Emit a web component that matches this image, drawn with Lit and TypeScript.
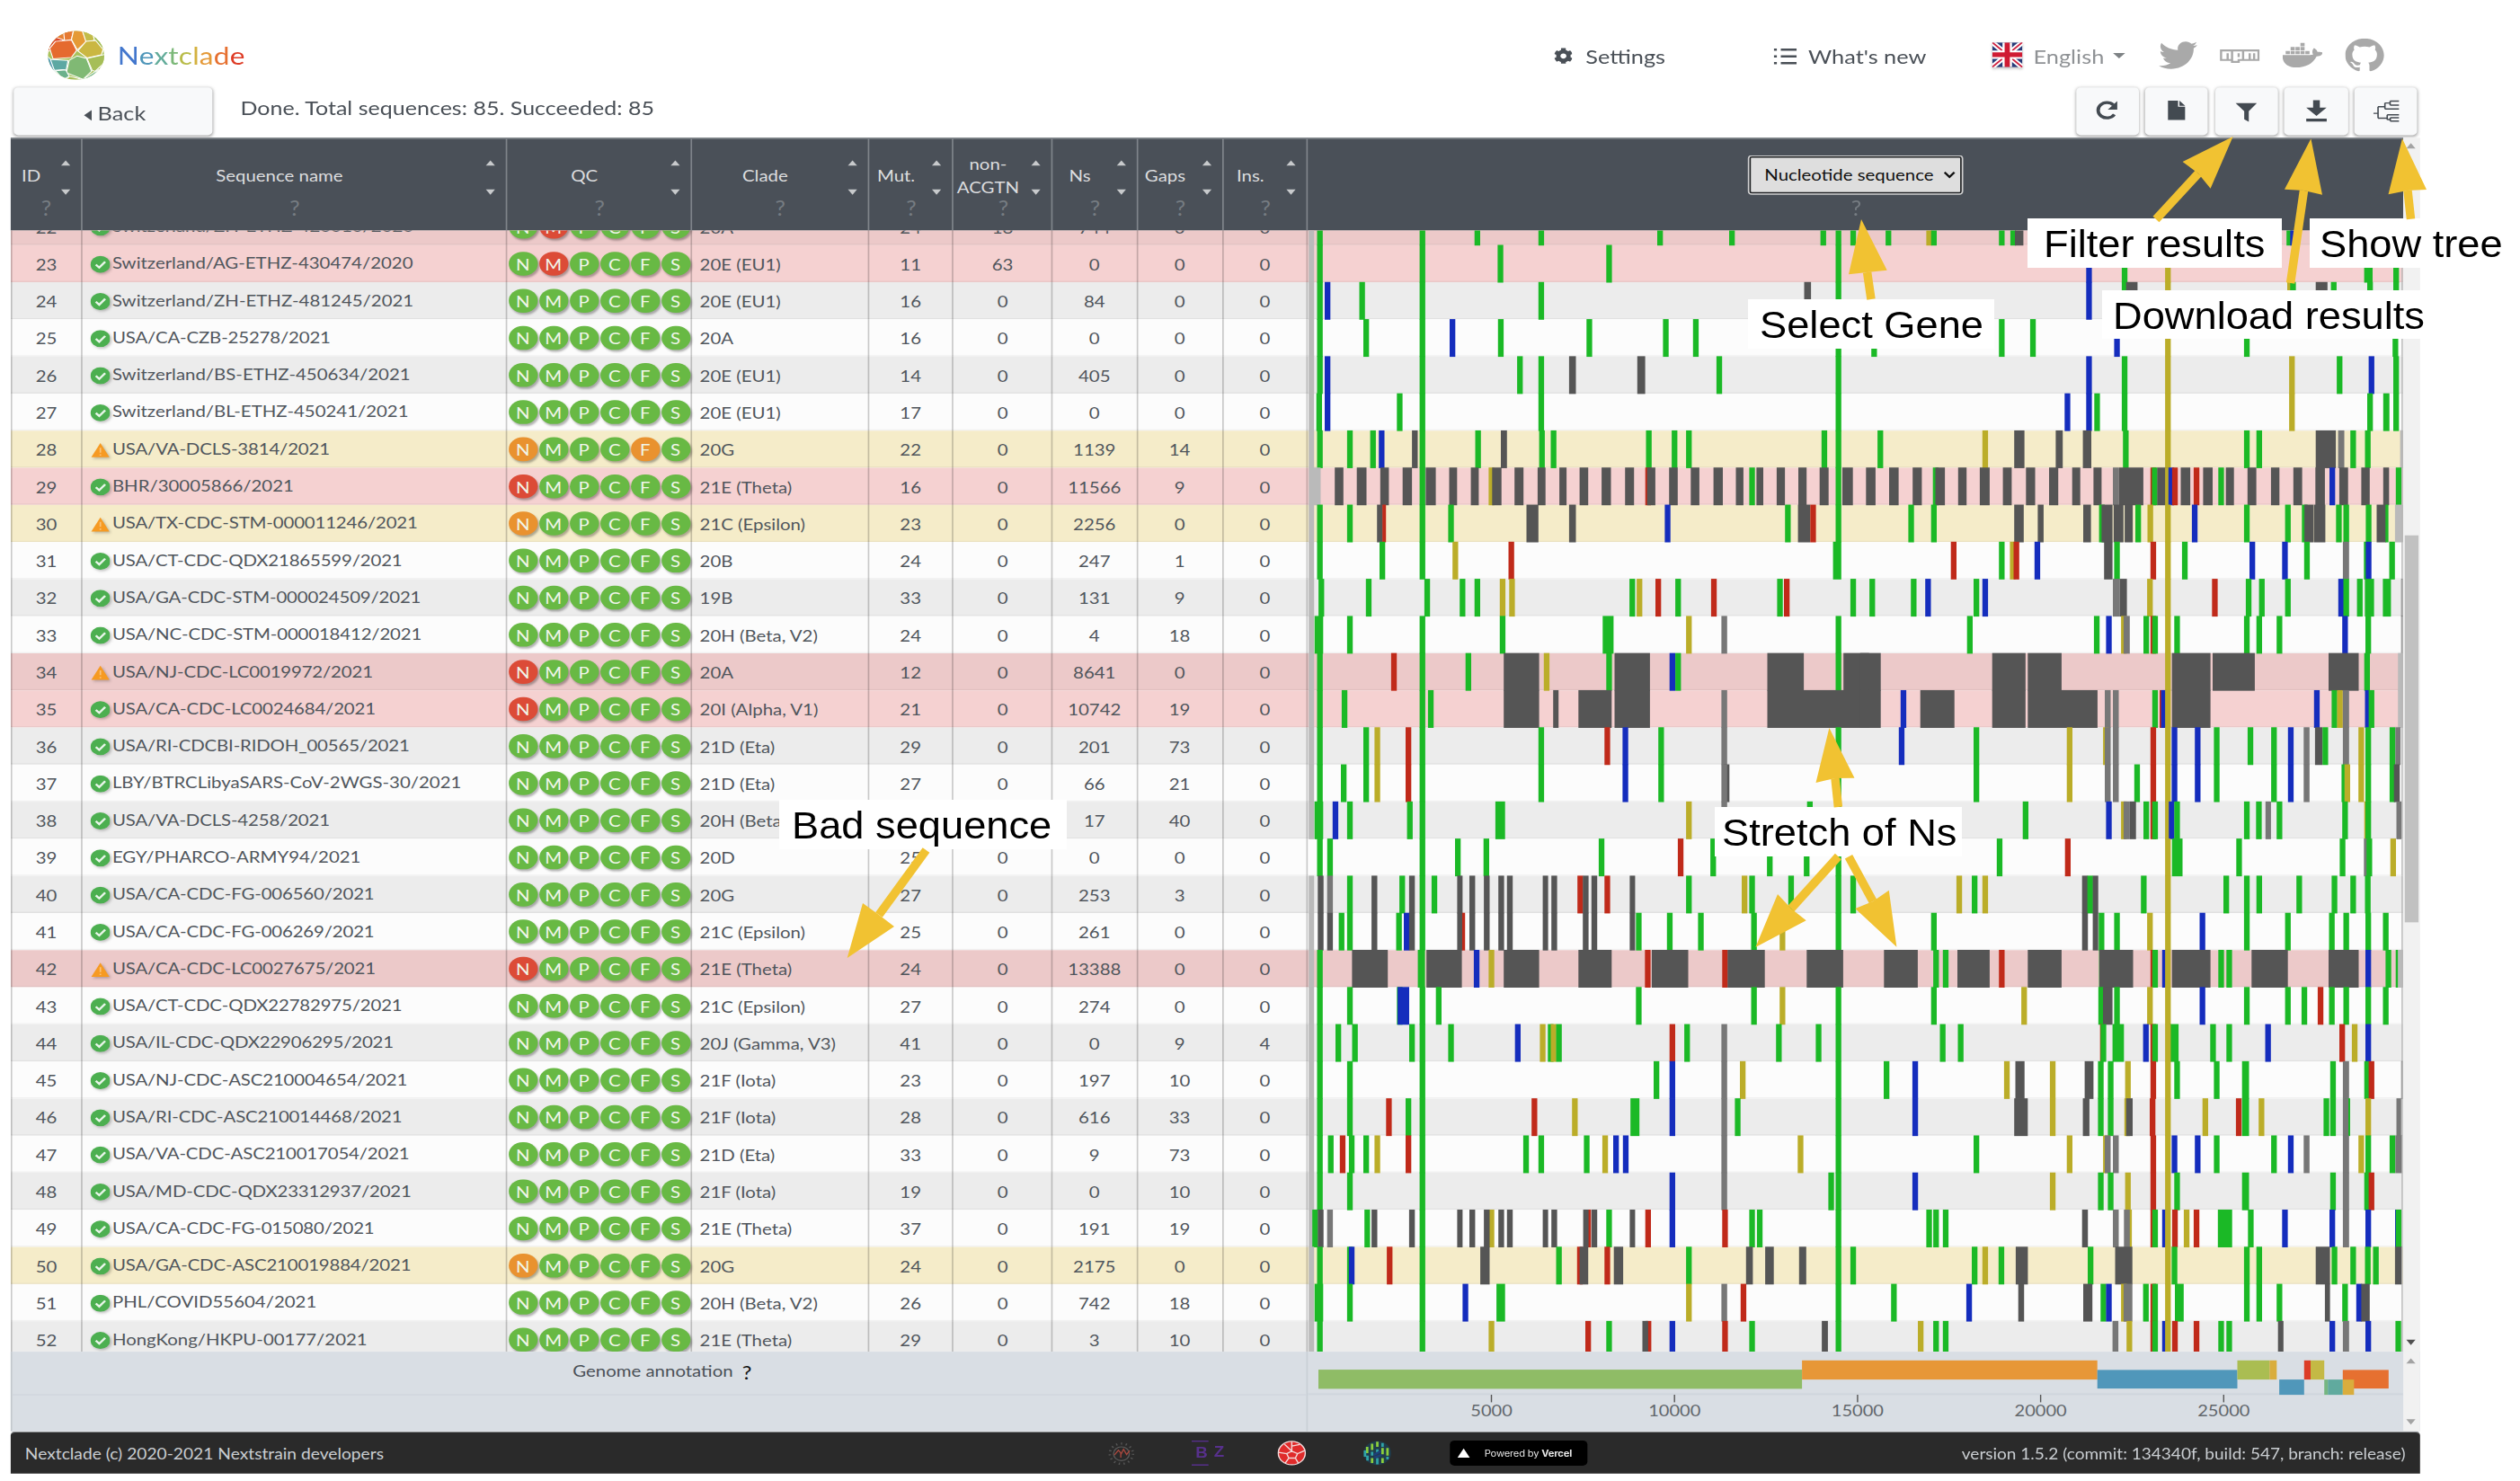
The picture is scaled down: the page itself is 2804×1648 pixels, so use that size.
import { LitElement, html, svg, css } from "lit";
import { customElement, property } from "lit/decorators.js";
import { classMap } from "lit/directives/class-map.js";

interface SeqRow {
  id: number;
  name: string;
  warn: boolean;
  qc: string;
  clade: string;
  counts: number[];
  head: string;
  tail: string;
}

/* One line per sequence:
   id | name | icon | qc flags | clade | mut nonACGTN ns gaps ins | first half markers | second half markers
   Marker: letter + centre, or letter + start-end. */
const SOURCE = `
22|Switzerland/ZH-ETHZ-420010/2020|o|grgggg|20A|24 18 744 0 0|m16-31 g47 g331 g483 g660 g989 g1188 g1441 g1483 g1524|g77 y188 g201 g386 g417 n422-445 g1170 b1180
23|Switzerland/AG-ETHZ-430474/2020|o|grgggg|20E (EU1)|11 63 0 0 0|m16-31 g47 g331 g547 g848 g1483|b624 g721 y839 g1374-1397 g1461
24|Switzerland/ZH-ETHZ-481245/2021|o|gggggg|20E (EU1)|16 0 84 0 0|m16-31 g47 b68 g164 g331 g660 n1388-1407 g1483|b624 g721 n725-756 y839 y1172 g1180 n1242-1274 g1291 g1390 g1461
25|USA/CA-CZB-25278/2021|o|gggggg|20A|16 0 0 0 0|m16-31 g47 g175 g331 b414 g548 g793 g1005 g1088 g1483|g38 g386 g471 b700 y839 g1054 g1459
26|Switzerland/BS-ETHZ-450634/2021|o|gggggg|20E (EU1)|14 0 405 0 0|m16-31 g47 b68 g331 g601 g660 n737-756 n926-948 g1153 g1483|b624 g721 y839 y1177 g1307 b1394 g1461
27|Switzerland/BL-ETHZ-450241/2021|o|gggggg|20E (EU1)|17 0 0 0 0|m16-31 g45 b68 g268 g331 g660 g1483|b565 b624 g646 g721 y839 y1177 g1390 g1426-1443 g1461
28|USA/VA-DCLS-3814/2021|w|ogggog|20G|22 0 1139 14 0|m16-31 g47 g130 g194 b218 n302-318 g331 g485 n548-565 g662 g694 g958 g1029 g1069 g1444 g1483|g55 y341 n420-448 n533-552 n607-630 g724 y839 g1054 g1088 n1242-1297 x1303-1320 g1344 g1384 m1472-1480
29|BHR/30005866/2021|o|rggggg|21E (Theta)|16 0 11566 9 0|m16-49 n88-112 n149-176 n214-238 n276-302 g331 n340-368 n405-427 n465-487 y522 n524-550 n586-611 n650-672 n710-730 n766-790 n827-853 n892-917 r956 n953-976 n1014-1038 n1074-1098 n1137-1163 n1199-1220 g1244 n1256-1275 n1312-1335 n1372-1395 n1431-1456 g1483 n1494-1523|n16-42 n79-105 n143-168 g206 n205-231 n267-290 n326-353 n389-413 n452-477 n515-540 n578-600 n636-658 x689-706 n706-772 r799 g803 n810-839 y839 b848 r858 n874-900 r917 n935-961 g984 n997-1019 n1056-1080 n1120-1143 n1181-1205 n1241-1267 b1287 n1306-1330 n1366-1389 n1426-1442 g1468
30|USA/TX-CDC-STM-000011246/2021|w|oggggg|21C (Epsilon)|23 0 2256 0 0|m16-31 g47 g130 n205-221 r220-230 g331 g410 n619-652 n737-756 b1010 g1343 n1371-1405 r1413 g1483|g139 g201 n420-446 n484-500 n608-629 g659 n658-688 n691-718 n721-743 g758 y791 y839 b912 g1054 g1166 g1212 n1211-1236 n1237-1268 g1305 g1325 g1386 n1408-1434 g1432-1440 m1458-1480
31|USA/CT-CDC-QDX21865599/2021|o|gggggg|20B|24 0 247 1 0|m16-31 g47 g220 g331 y422 r577 g1468-1491|r255 g386 y416 r426 b483 n665-688 g700 r799 y839 g885 b1069 b1158 g1218 x1316-1333 g1381 b1386 g1450
32|USA/GA-CDC-STM-000024509/2021|o|gggggg|19B|33 0 131 9 0|m16-31 g51 g182 g344 g442 g483 y553 y579 g912 y932 r984 g1039 r1138 g1321 r1340 g1524|g33 g146 b185 g317 b341 x689-708 n708-727 y790 y839 r967 g1059 g1095 g1166 b1311 g1325 g1362 g1376-1401 g1425-1447 n1475-1479
33|USA/NC-CDC-STM-000018412/2021|o|gggggg|20H (Beta, V2)|24 0 4 18 0|m16-31 g32-56 g130 g331 g553 g830-860 y1069 x1159-1175 g1483|g299 g645 b678 y719 x718-735 g780 r799 g804 y839 g864 g1054 g1088 g1143 b1322 g1385 n1475-1479
34|USA/NJ-CDC-LC0019972/2021|w|rggggg|20A|12 0 8641 0 0|m16-31 g47 r252 g331 g458 n556-654 y675 g848 n863-961 b1023 g1039 n1286-1387 g1483 n1497-1568|n0-56 n360-451 n457-549 y839 n850-955 n961-1076 n1277-1359 g1382 m1466-1480
35|USA/CA-CDC-LC0024684/2021|o|rggggg|20I (Alpha, V1)|21 0 10742 19 0|m16-31 g47 g115 g331 g354 n556-654 n693-708 n763-855 n863-961 x1159-1175 n1286-1568|n0-56 b118 n164-257 n360-451 n457-647 x667-683 x689-705 g804 r824 b828 y839 n850-955 b1245 g1293 y1308 x1316-1333 b1384 g1394 m1466-1480
36|USA/RI-CDCBI-RIDOH_00565/2021|o|gggggg|21D (Eta)|29 0 201 73 0|m16-31 g47 g175 y206 r292 g331 g660 r843 b893 g992 x1159-1175 g1483|b113 g317 y571 y670 x667-683 x689-705 r799 y839 b857 b920 g972 g1064 g1128 b1174 x1209-1225 n1240-1260 g1268 x1316-1333 y1366 g1385 g1451 x1459-1473
37|LBY/BTRCLibyaSARS-CoV-2WGS-30/2021|o|gggggg|21D (Eta)|27 0 66 21 0|m16-31 g47 g113 g175 y206 r292 g331 g660 b893 g992 n1166-1181 x1159-1175 g1483|g317 y571 x667-683 x689-705 g755 r799 y839 b857 b920 g972 g1128 b1174 x1209-1225 g1320 y1328 y1366 g1385 g1451 n1455-1471
38|USA/VA-DCLS-4258/2021|o|gggggg|20H (Beta, V2)|25 0 17 40 0|m16-31 g32-56 b90 g130 g296 g331 g533-560 y1069 x1159-1175 g1404 g1483|g451 b678 y719 x718-735 n735-752 g780 r799 g804 y839 b849 g864 g1054 g1087 x1105-1120 g1143 g1322 y1382 g1385 x1462-1476
39|EGY/PHARCO-ARMY94/2021|o|gggggg|20D|25 0 0 0 0|g47 g75 g331 g429 g508 g827 r1046 g1136 g1293 g1395 g1483|g380 r566 g850-879 y839 g1033 g1315 x1381 g1388 y1453
40|USA/CA-CDC-FG-006560/2021|o|gggggg|20G|27 0 253 3 0|m16-31 n41-57 x67-83 g130 n190-206 g275 n294-310 g331 g364 n427-442 n461-477 n501-517 n541-557 n565-581 n664-679 n688-704 r768 n775-791 n799-815 r843 n905-920 g1069 y1223 g1244 g1352 g1483 g1524|y270 g312 y341 n605-621 g627 n634-649 g773 y839 g998 g1054 g1088 g1197 g1293 g1344 g1384
41|USA/CA-CDC-FG-006269/2021|o|gggggg|21C (Epsilon)|25 0 261 0 0|m16-31 n41-57 n67-83 g107 g130 n190-206 g266 b287 n294-310 g331 n427-442 r441-449 n461-477 n501-517 n541-557 n565-581 n664-679 n688-704 n775-791 n799-815 n905-920 g930 g1016 g1102 g1249 y1328 g1483|g201 n605-621 n634-649 g658 g700 y790 y839 b933 g1054 g1166 g1286 g1325 g1385 g1433
42|USA/CA-CDC-LC0027675/2021|w|rggggg|21E (Theta)|24 0 13388 0 0|m16-31 g47 n136-235 g318-338 n342-440 b481 y522 n556-654 n763-855 r955 n966-1067 r1169 n1176-1279 n1395-1496|n65-157 g207 g233 n265-353 r386 n457-549 g659 n652-744 r799 g804 b831 y839 n850-955 g984 g1006 n1067-1166 n1277-1359 b1385 g1440 g1460-1467 m1466-1480
43|USA/CT-CDC-QDX22782975/2021|o|gggggg|21C (Epsilon)|27 0 274 0 0|m16-31 g47 g130 g268 b262-294 g331 g376 g930 g1249 y1328 g1483|g201 y447 g657 n662-688 g700 y790 y839 b933 g1054 g1166 g1211 r1255 g1286 g1325 g1385 g1433
44|USA/IL-CDC-QDX22906295/2021|o|gggggg|20J (Gamma, V3)|41 0 0 9 4|m16-31 g47 g98 g144 g302 g331 g410 b595 y664 g686 y694 g709 r1023 g1064 x1159-1175 g1318 g1428 g1483|g225 g274 r654-660 g663 g688-719 b779 r799 g804 g844-868 y839 g962 g1006 b1112 r1314 y1348 b1385
45|USA/NJ-CDC-ASC210004654/2021|o|gggggg|21F (Iota)|23 0 197 10 0|m16-31 g47 g130 g331 g979 b1023 x1159-1175 y1218 g1483|g72 b150 y400 n423-448 y525 n612-636 g656 g683 y730 r799 y839 g864 g972 g1041-1060 g1289 x1316-1333 g1382 r1394 n1475-1479
46|USA/RI-CDC-ASC210014468/2021|o|gggggg|21F (Iota)|28 0 616 33 0|m16-31 g47 g130 r238 g292 g331 r641 y753 g907-932 b1023 x1159-1175 g1204 g1483|b150 n420-457 y525 n607-625 g656 g683 y728 n725-743 r797 y839 y941 r1032 g1041-1060 y1094 g1271 g1289 g1328 x1316-1331 y1385 x1462-1475
47|USA/VA-CDC-ASC210017054/2021|o|gggggg|21D (Eta)|33 0 9 73 0|m16-31 g47 g77 r110 g135 g175 y206 r292 g331 g618 g660 g786 y837 b867 b894 x1159-1175 y1378 g1483|g317 y571 y670 x667-683 x689-705 r799 y839 b857 b920 g972 g1128 b1174 x1209-1225 x1316-1333 y1366 g1385 g1451 x1459-1478
48|USA/MD-CDC-QDX23312937/2021|o|gggggg|21F (Iota)|19 0 0 10 0|m16-31 g47 g130 g331 b1023 x1159-1175 g1463 g1483|b150 y525 g656 g683 y730 r799 y839 g864 g1041-1060 g1289 x1316-1333 g1382 r1394
49|USA/CA-CDC-FG-015080/2021|o|gggggg|21E (Theta)|37 0 191 19 0|m16-31 g26-42 n41-57 x67-83 g178 n190-206 n294-310 g331 n427-442 n461-477 y522 n501-517 n541-557 n565-581 n664-679 n688-704 r790 n776-791 n799-815 g848 n905-920 r956 b1023 r1169 g1244 g1265 g1483|g188 g207 g233 n605-621 x689-705 y733 x719-735 r799 g804 b831 y839 r858 y890 r917 g975-1014 g1065 b1158 b1287 x1316-1333 b1385 b1466 g1468
50|USA/GA-CDC-ASC210019884/2021|o|oggggg|20G|24 0 2175 0 0|m16-31 g47 g130 b135 r240 n491-517 g331 g709 r767 n766-790 r843 n861-887 g1069 n1227-1246 n1280-1304 n1374-1394 g1483 g1524|g312 y341 g385 n424-457 g628 n695-742 g857 y839 g1054 g1088 n1242-1281 g1293 g1344 g1384 g1406 n1458-1477
51|PHL/COVID55604/2021|o|gggggg|20H (Beta, V2)|26 0 742 18 0|m16-31 g32-56 g130 g331 b450 g536-560 y1069 x1159-1175 r1220 g1483|g92 b297 n431-447 n608-633 g663 b678 y719 x718-742 g779 r799 g804 y839 g858-882 g1054 g1088 g1143 n1267-1281 g1322 b1360 n1366-1389
52|HongKong/HKPU-00177/2021|o|gggggg|21E (Theta)|29 0 3 10 0|m16-31 g47 g331 y522 r790 g848 r957 n940-956 b1023 r1169 g1244 n1437-1454 g1483|y165 g207 g233 x688-704 y734 r799 g804 b831 y839 r858 r917 g984 g1006 n1139-1154 b1287 x1316-1333 b1385 g1467
`;

const ROWS: SeqRow[] = SOURCE.trim()
  .split("\n")
  .map((line) => {
    const [id, name, icon, qc, clade, counts, head, tail] = line.split("|");
    return { id: +id, name, warn: icon === "w", qc, clade, counts: counts.split(" ").map(Number), head, tail };
  });

const COLORS: Record<string, string> = {
  g: "#1bb926",
  b: "#152dbd",
  r: "#c02a1a",
  y: "#bbad29",
  n: "#555555",
  x: "#777777",
  m: "#bababa",
};

const MARKER = 6.3;

function markers(list: string, origin: number, scale: number) {
  return list
    .split(" ")
    .filter(Boolean)
    .map((token) => {
      const [a, b] = token.slice(1).split("-").map(Number);
      const start = b === undefined ? origin + a / scale - MARKER / 2 : origin + a / scale;
      const width = b === undefined ? MARKER : (b - a) / scale;
      return svg`<rect x=${start.toFixed(1)} y="-0.3" width=${width.toFixed(1)} height="42" fill=${COLORS[token[0]]}></rect>`;
    });
}

const COLUMNS: [string, string][] = [
  ["ID", "id"],
  ["Sequence name", "name"],
  ["QC", "qc"],
  ["Clade", "clade"],
  ["Mut.", "mut"],
  ["non- ACGTN", "non"],
  ["Ns", "ns"],
  ["Gaps", "gaps"],
  ["Ins.", "ins"],
];

const GENES: [number, number, number, number, string][] = [
  [1467.2, 1524.7, 538.1, 21.3, "#8fbc66"],
  [2005.3, 1514.4, 328.6, 21.3, "#e79737"],
  [2333.9, 1525, 155.8, 20.7, "#5097ba"],
  [2489.7, 1514.4, 35.8, 21.3, "#aabd52"],
  [2525.5, 1514.4, 8, 21.3, "#d9ad3d"],
  [2536.3, 1535.7, 27.7, 17, "#5097ba"],
  [2564, 1514.4, 7.2, 21.3, "#dc3d27"],
  [2571.2, 1514.4, 15.2, 21.3, "#c4b945"],
  [2607, 1525, 51, 20.7, "#e67030"],
  [2586.4, 1535.7, 4, 17, "#75b681"],
  [2590.4, 1535.7, 16.6, 17, "#60aa9e"],
  [2607, 1535.7, 12.5, 17, "#d9ad3d"],
];

const TICKS: [number, number][] = [
  [5000, 1659.7],
  [10000, 1863.4],
  [15000, 2067.1],
  [20000, 2270.8],
  [25000, 2474.5],
];

const NOTES: [string, string][] = [
  ["Select Gene", "n-gene"],
  ["Filter results", "n-filter"],
  ["Show tree", "n-tree"],
  ["Download results", "n-down"],
  ["Stretch of Ns", "n-ns"],
  ["Bad sequence", "n-bad"],
];

/* tip, two barb corners, shaft start, shaft end */
const ARROWS: number[][] = [
  [2071, 244, 2057, 305.3, 2099.7, 300.7, 2077.6, 303, 2082, 333],
  [2484.6, 152, 2428.6, 180, 2459.6, 209.7, 2446, 193, 2399, 244],
  [2571.4, 154.3, 2542, 210.7, 2584, 216.7, 2563.5, 212, 2548.6, 315],
  [2673, 154.3, 2657.5, 216.3, 2700, 211, 2679, 212, 2682.5, 243.7],
  [2035.4, 810, 2020.5, 871, 2063.5, 865.7, 2042, 866, 2045.4, 898],
  [1953.4, 1054, 1978, 995, 2009.7, 1024.3, 1993, 1011, 2045.4, 953],
  [2110.4, 1053.7, 2101.8, 990.7, 2064.3, 1011, 2084, 1003, 2057, 953.3],
  [942.7, 1066, 960, 1005, 995, 1031, 978, 1018, 1030.5, 946],
];

@customElement("seq-row")
class SeqRowElement extends LitElement {
  @property({ attribute: false }) row!: SeqRow;

  static styles = css`
    :host { display: block; height: 28px; }
    .row { display: grid; grid-template-columns: 47.1px 278px 121.1px 115.6px 55.8px 64.7px 55.5px 56.1px 55.5px 716.6px; height: 28px; font-size: 12px; color: #50565c; box-shadow: inset 0 -1px 0 rgba(0,0,0,.045); }
    .odd { background: #fcfcfc; }
    .even { background: #ececec; }
    .bad.odd { background: #f5d1d1; }
    .bad.even { background: #ecc9c9; }
    .mid { background: #f5ecc9; }
    .cell { display: flex; align-items: center; justify-content: center; border-right: 1px solid rgba(0,0,0,.2); box-sizing: border-box; min-width: 0; white-space: nowrap; padding-top: .5px; }
    .first { border-left: 1px solid rgba(0,0,0,.2); }
    .left { justify-content: flex-start; padding-left: 5px; }
    .icon { width: 13.4px; height: 13px; flex: none; margin-right: 1.2px; filter: drop-shadow(1px 1px 1px rgba(0,0,0,.25)); }
    .warn { margin-top: 1.5px; }
    .name { position: relative; top: -.4px; }
    .usa { letter-spacing: -.09px; }
    .qc { padding-left: 1px; gap: 1.3px; justify-content: flex-start; }
    .dot { width: 18.7px; height: 18.7px; border-radius: 50%; background: #68b944; color: #f0f5ea; display: flex; align-items: center; justify-content: center; box-shadow: 1px 1.5px 1.5px rgba(0,0,0,.3); flex: none; }
    .dot.r { background: #dc4b37; }
    .dot.o { background: #e9922f; }
    .track { display: block; width: 716.6px; height: 28px; overflow: visible; }
  `;

  render() {
    const r = this.row;
    const bad = r.qc.includes("r");
    const mid = !bad && r.qc.includes("o");
    return html`
      <div class=${classMap({ row: true, odd: r.id % 2 === 1, even: r.id % 2 === 0, bad, mid })}>
        <div class="cell first">${r.id}</div>
        <div class="cell left">
          ${r.warn
            ? html`<svg class="icon warn" viewBox="0 0 14 14"><path d="M7 1.5 L13.4 13 H.6Z" fill="#f69a22"></path><path d="M7 5.2v4M7 10.5v1.2" stroke="#f9c27a" stroke-width="1.1"></path></svg>`
            : html`<svg class="icon" viewBox="0 0 14 14"><circle cx="7" cy="7" r="6.9" fill="#4caf50"></circle><path d="M3.8 7.2 L6.2 9.6 L10.4 4.9" fill="none" stroke="#e8f5e9" stroke-width="1.6"></path></svg>`}
          <span class=${classMap({ name: true, usa: r.name.startsWith("USA") })}>${r.name}</span>
        </div>
        <div class="cell qc">
          ${"NMPCFS".split("").map((c, i) => html`<span class="dot ${r.qc[i]}">${c}</span>`)}
        </div>
        <div class="cell left">${r.clade}</div>
        ${r.counts.map((n) => html`<div class="cell">${n}</div>`)}
        <svg class="track" viewBox="1455.4 0 1218.2 41.29" preserveAspectRatio="none">
          ${markers(r.head, 1450, 2.489)} ${markers(r.tail, 2070, 2.45)}
          <rect x="2672.4" y="0" width="1.4" height="41.3" fill="#b5b5b5"></rect>
        </svg>
      </div>
    `;
  }
}

const cog = svg`<path d="M487.4 315.7l-42.6-24.6c4.3-23.2 4.3-47 0-70.2l42.6-24.6c4.9-2.8 7.1-8.6 5.5-14-11.1-35.6-30-67.8-54.7-94.6-3.8-4.1-10-5.1-14.8-2.3L380.8 110c-17.9-15.4-38.5-27.3-60.8-35.1V25.8c0-5.6-3.9-10.5-9.4-11.7-36.7-8.2-74.3-7.8-109.2 0-5.5 1.2-9.4 6.1-9.4 11.7V75c-22.2 7.9-42.8 19.8-60.8 35.1L88.7 85.5c-4.9-2.8-11-1.9-14.8 2.3-24.7 26.7-43.6 58.9-54.7 94.6-1.7 5.4.6 11.2 5.5 14L67.3 221c-4.3 23.2-4.3 47 0 70.2l-42.6 24.6c-4.9 2.8-7.1 8.6-5.5 14 11.1 35.6 30 67.8 54.7 94.6 3.8 4.1 10 5.1 14.8 2.3l42.6-24.6c17.9 15.4 38.5 27.3 60.8 35.1v49.2c0 5.6 3.9 10.5 9.4 11.7 36.7 8.2 74.3 7.8 109.2 0 5.5-1.2 9.4-6.1 9.4-11.7v-49.2c22.2-7.9 42.8-19.8 60.8-35.1l42.6 24.6c4.9 2.8 11 1.9 14.8-2.3 24.7-26.7 43.6-58.9 54.7-94.6 1.5-5.5-.7-11.3-5.6-14.1zM256 336c-44.1 0-80-35.9-80-80s35.9-80 80-80 80 35.9 80 80-35.9 80-80 80z"></path>`;

@customElement("app-root")
class AppRoot extends LitElement {
  static styles = css`
    :host { display: block; position: relative; width: 2804px; height: 1648px; background: #fff; overflow: hidden; font-family: Lato, "Liberation Sans", sans-serif; }
    .stage { width: 1584px; height: 1117px; transform: scale(1.7, 1.4746); transform-origin: 0 0; color: #4a5057; font-size: 12px; display: flex; flex-direction: column; }
    .nav { height: 66px; display: flex; align-items: center; padding-top: 17px; box-sizing: border-box; }
    .logo { width: 37.6px; height: 37.6px; margin-left: 31.2px; }
    .brand { width: 939.6px; margin-left: 8.2px; font-size: 18.6px; position: relative; top: .6px; }
    .brand span { letter-spacing: .12px; }
    .l1 { color: #4377cd; } .l2 { color: #5097ba; } .l3 { color: #63ac9a; } .l4 { color: #7cb879; }
    .l6 { color: #b9bc4a; } .l7 { color: #d4b13f; } .l8 { color: #e49938; } .l9 { color: #e67030; } .l10 { color: #de3c26; }
    .gear { width: 12.6px; height: 12.6px; fill: #4a5057; margin-right: 8.7px; position: relative; top: .6px; }
    .navtxt { font-size: 14.9px; width: 123.4px; white-space: nowrap; }
    .list { width: 15px; height: 13px; margin-right: 7.3px; stroke: #4a5057; stroke-width: 1.7; position: relative; top: .6px; }
    .news { width: 120.8px; }
    .flag { width: 19.6px; height: 18.6px; margin-right: 7px; filter: drop-shadow(0 1.5px 1px rgba(0,0,0,.25)); }
    .lang { width: 51.6px; color: #8f9295; }
    .caret { border: 4.4px solid transparent; border-top: 4.4px solid #7e8285; border-bottom: 0; width: 0; margin-right: 22.2px; }
    .soc { height: 25.4px; fill: #a9a9a9; flex: none; }
    .tw { width: 25.4px; margin-right: 15px; }
    .npm { width: 26px; margin-right: 15px; }
    .dk { width: 26.4px; margin-right: 14.8px; }
    .gh { width: 25.4px; }
    .bar { height: 38px; display: flex; padding-left: 8.5px; box-sizing: border-box; }
    .btn { height: 35.8px; border-radius: 3px; background: #f8f9fa; box-shadow: 0 1px 2.5px rgba(0,0,0,.38); display: flex; align-items: center; justify-content: center; flex: none; box-sizing: border-box; }
    .back { width: 130px; font-size: 14.9px; gap: 4.4px; padding: 2.4px 0 0 3px; }
    .tri { border: 4.6px solid transparent; border-right: 5.4px solid #4a5057; border-left: 0; margin-top: 3px; }
    .status { width: 1202px; padding-left: 18.8px; font-size: 14.7px; letter-spacing: .02px; padding-top: 6.4px; }
    .tools { display: flex; gap: 4.4px; margin-left: -.7px; }
    .tool { width: 41.2px; }
    .tool svg { width: 22px; height: 25px; display: block; }
    .main { display: flex; margin-left: 6.8px; height: 916.4px; }
    .table { width: 1566px; display: flex; flex-direction: column; }
    .head { height: 69.9px; display: grid; grid-template-columns: 47.1px 278px 121.1px 115.6px 55.8px 64.7px 55.5px 56.1px 55.5px 716.6px; background: #4a5058; color: #dcdddf; flex: none; box-shadow: inset 0 1px 0 #81868b; }
    .h { border-right: 1px solid #7f848a; display: grid; grid-template-columns: 1fr 19px; grid-template-rows: 53px 17px; box-sizing: border-box; }
    .h.last { border: 0; grid-template-columns: 1fr; justify-items: center; }
    .lab { display: flex; align-items: center; justify-content: center; text-align: center; line-height: 17.4px; padding-top: 4px; white-space: nowrap; }
    .two { white-space: normal; width: 42px; }
    .sorts { display: flex; flex-direction: column; gap: 18.2px; padding: 17.1px 0 0 6px; }
    .up { width: 0; border: 3px solid transparent; border-top: 0; border-bottom: 4px solid #c8cacc; }
    .dn { width: 0; border: 3px solid transparent; border-bottom: 0; border-top: 4px solid #c8cacc; }
    .q { grid-column: 1 / -1; text-align: center; color: #767c82; font-size: 15px; line-height: 15px; margin-top: -6.6px; padding-left: 1px; }
    .sel { margin-top: 13.6px; width: 138.8px; height: 28px; border: 1.2px solid #1d1f21; outline: 1px solid #cfcfcf; background: #dedede; color: #111; display: flex; align-items: center; justify-content: space-between; padding: 0 3px 0 8.8px; box-sizing: border-box; border-radius: 1.5px; white-space: nowrap; }
    .sel svg { width: 8px; height: 8px; fill: none; stroke: #111; stroke-width: 1.4; }
    .rows { height: 846.6px; overflow: hidden; }
    .shift { margin-top: -17.1px; display: block; }
    .side { width: 11.2px; background: #f1f1f1; display: flex; flex-direction: column; align-items: center; box-sizing: border-box; padding: 4.4px 0 5px; }
    .thumb { width: 8.6px; height: 292px; background: #c1c1c1; margin-top: 292px; }
    .fill { flex: 1; }
    .sup { border: 3px solid transparent; border-top: 0; border-bottom: 4px solid #a3a3a3; width: 0; }
    .sdn { border: 3px solid transparent; border-bottom: 0; border-top: 4px solid #505050; width: 0; }
    .sdn.dim { border-top-color: #a3a3a3; }
    .genome { margin-left: 6.8px; height: 60.1px; display: flex; background: #d9dee4; box-sizing: border-box; }
    .gl { width: 849.3px; border-right: 1px solid #c9cfd6; border-left: 1px solid #c3c8cd; box-sizing: border-box; }
    .gtxt { height: 32.6px; border-bottom: 1.4px solid #d0d6dd; display: flex; justify-content: center; padding: 7px 0 0 4px; gap: 6px; box-sizing: border-box; line-height: 16px; }
    .gq { color: #111; font-size: 14px; position: relative; top: 1px; }
    .gsvg { width: 716.6px; height: 60.1px; display: block; }
    .gside { flex: none; height: 60.1px; }
    .foot { margin-left: 6.8px; width: 1577.2px; height: 31.7px; background: #2a2a2a; border-top: 1px solid #8d9092; box-sizing: border-box; border-radius: 3px 3px 0 0; color: #c9cdd1; font-size: 11.2px; display: flex; align-items: center; padding: 0 9.6px; }
    .copy { width: 709px; white-space: nowrap; font-size: 11.3px; }
    .ver { margin-left: auto; white-space: nowrap; }
    .f1 { width: 18px; height: 18px; margin-right: 37px; }
    .bz { width: 20px; display: flex; gap: 4px; color: #57308c; font-size: 11px; margin-right: 36px; font-weight: 700; font-family: "Liberation Sans", sans-serif; justify-content: center; line-height: 17px; }
    .bb { border-top: 1px solid #57308c; border-bottom: 1px solid #57308c; padding-left: 3px; }
    .f3 { width: 19px; height: 19px; margin-right: 36.6px; }
    .vercel { width: 90px; height: 19px; background: #000; border-radius: 3px; color: #e6e6e6; font-size: 6.6px; display: flex; align-items: center; gap: 9.5px; margin-left: 1px; font-family: Inter, sans-serif; letter-spacing: -.12px; white-space: nowrap; }
    .vt { border: 4px solid transparent; border-top: 0; border-bottom: 7px solid #fff; margin-left: 5.5px; }
    .over { position: absolute; left: 0; top: 0; width: 2804px; height: 1648px; }
    .note { position: absolute; background: #fff; font-family: "Liberation Sans", Arial, sans-serif; font-size: 43px; line-height: 57px; height: 54.7px; color: #000; white-space: nowrap; }
    .note span { display: inline-block; transform: scaleX(1.052); transform-origin: 0 50%; }
    .n-gene { left: 1945px; top: 333px; width: 261px; padding-left: 13px; }
    .n-filter { left: 2256px; top: 243.4px; width: 264.6px; padding-left: 18px; }
    .n-tree { left: 2569.5px; top: 243.4px; width: 213px; padding-left: 11px; }
    .n-down { left: 2338.6px; top: 322.5px; width: 351px; padding-left: 12px; }
    .n-ns { left: 1908.4px; top: 898px; width: 266.7px; padding-left: 7.6px; }
    .n-bad { left: 867px; top: 890.3px; width: 306px; padding-left: 14px; }
  `;

  private nav() {
    return html`
      <div class="nav">
        <svg class="logo" viewBox="0 0 100 100">
          <defs><clipPath id="ball"><circle cx="50" cy="50" r="49"></circle></clipPath></defs>
          <g clip-path="url(#ball)" stroke="#fff" stroke-width="1.7">
            <rect x="-5" y="-5" width="110" height="110" fill="#a9c25c"></rect>
            <path d="M-5 20 L20 10 L28 20 L12 25 L4 40 L-5 50Z" fill="#dd4a2b"></path>
            <path d="M12 12 L34 -3 L40 0 L30 20Z" fill="#e68133"></path>
            <path d="M28 0 L46 -3 L42 18 L30 21Z" fill="#e67a32"></path>
            <path d="M4 36 L14 22 L42 19 L51 40 L42 54 L10 57Z" fill="#e56a2f"></path>
            <path d="M46 -2 H60 L68 22 L52 39 L42 18Z" fill="#e59a36"></path>
            <path d="M60 -3 L80 10 L82 20 L67 22Z" fill="#c3bc49"></path>
            <path d="M80 8 L100 25 L96 42 L82 20Z" fill="#a4be55"></path>
            <path d="M53 41 L67 22 L84 20 L97 38 L94 49 L69 55Z" fill="#cab742"></path>
            <path d="M69 56 L100 48 L102 62 L83 82 L78 80Z" fill="#a6be57"></path>
            <path d="M38 60 L52 51 L68 56 L77 82 L62 98 L33 85Z" fill="#80b974"></path>
            <path d="M4 58 L36 60 L33 78 L12 80Z" fill="#5da8a3"></path>
            <path d="M-2 50 L5 57 L12 80 L20 92 L-5 90Z" fill="#529ab6"></path>
            <path d="M14 81 L32 79 L38 92 L28 98Z" fill="#6bb18c"></path>
            <path d="M84 82 L90 78 L70 104 L65 96Z" fill="#70b487"></path>
            <path d="M38 92 L60 98 L50 104 L30 103Z" fill="#a6be57"></path>
          </g>
        </svg>
        <div class="brand"><span class="l1">N</span><span class="l2">e</span><span class="l3">x</span><span class="l4">t</span><span class="l6">c</span><span class="l7">l</span><span class="l8">a</span><span class="l9">d</span><span class="l10">e</span></div>
        <svg class="gear" viewBox="0 0 512 512">${cog}</svg>
        <div class="navtxt">Settings</div>
        <svg class="list" viewBox="0 0 15 13"><path d="M0 1.4h2M0 6.5h2M0 11.6h2M4.6 1.4H15M4.6 6.5H15M4.6 11.6H15"></path></svg>
        <div class="navtxt news">What's new</div>
        <svg class="flag" viewBox="0 0 60 56" preserveAspectRatio="none">
          <rect width="60" height="56" fill="#283a78"></rect>
          <path d="M0 0L60 56M60 0L0 56" stroke="#fff" stroke-width="11"></path>
          <path d="M0 0L60 56M60 0L0 56" stroke="#cf2240" stroke-width="3.6"></path>
          <path d="M30 0V56M0 28H60" stroke="#fff" stroke-width="19"></path>
          <path d="M30 0V56M0 28H60" stroke="#cf1b33" stroke-width="10.5"></path>
        </svg>
        <div class="navtxt lang">English</div>
        <div class="caret"></div>
        <svg class="soc tw" viewBox="0 0 512 512" preserveAspectRatio="none"><path d="M459.37 151.716c.325 4.548.325 9.097.325 13.645 0 138.72-105.583 298.558-298.558 298.558-59.452 0-114.68-17.219-161.137-47.106 8.447.974 16.568 1.299 25.34 1.299 49.055 0 94.213-16.568 130.274-44.832-46.132-.975-84.792-31.188-98.112-72.772 6.498.974 12.995 1.624 19.818 1.624 9.421 0 18.843-1.3 27.614-3.573-48.081-9.747-84.143-51.98-84.143-102.985v-1.299c13.969 7.797 30.214 12.67 47.431 13.319-28.264-18.843-46.781-51.005-46.781-87.391 0-19.492 5.197-37.36 14.294-52.954 51.655 63.675 129.3 105.258 216.365 109.807-1.624-7.797-2.599-15.918-2.599-24.04 0-57.828 46.782-104.934 104.934-104.934 30.213 0 57.502 12.67 76.67 33.137 23.715-4.548 46.456-13.32 66.599-25.34-7.798 24.366-24.366 44.833-46.132 57.827 21.117-2.273 41.584-8.122 60.426-16.243-14.292 20.791-32.161 39.308-52.628 54.253z"></path></svg>
        <svg class="soc npm" viewBox="0 0 576 512"><path d="M288 288h-32v-64h32v64zm288-128v192H288v32H160v-32H0V160h576zm-416 32H32v128h64v-96h32v96h32V192zm160 0H192v160h64v-32h64V192zm224 0H352v128h64v-96h32v96h32v-96h32v96h32V192z"></path></svg>
        <svg class="soc dk" viewBox="0 0 640 512"><path d="M349.9 236.3h-66.1v-59.4h66.1v59.4zm0-204.3h-66.1v60.7h66.1V32zm78.2 144.8H362v59.4h66.1v-59.4zm-156.3-72.1h-66.1v60.1h66.1v-60.1zm78.1 0h-66.1v60.1h66.1v-60.1zm276.8 100c-14.4-9.7-47.6-13.2-73.1-8.4-3.3-24-16.7-44.9-41.1-63.7l-14-9.3-9.3 14c-18.4 27.8-23.4 73.6-3.7 103.8-8.7 4.7-25.8 11.1-48.4 10.7H2.4c-8.7 50.8 5.8 116.8 44 162.1 37.1 43.9 92.7 66.2 165.4 66.2 157.4 0 273.9-72.5 328.4-204.2 21.4.4 67.6.1 91.3-45.2 1.5-2.5 6.6-13.2 8.5-17.1l-13.3-8.9zm-511.1-27.9h-66v59.4h66.1v-59.4zm78.1 0h-66.1v59.4h66.1v-59.4zm78.1 0h-66.1v59.4h66.1v-59.4zm-78.1-72.1h-66.1v60.1h66.1v-60.1z"></path></svg>
        <svg class="soc gh" viewBox="0 0 16 16"><path d="M8 0C3.58 0 0 3.58 0 8c0 3.54 2.29 6.53 5.47 7.59.4.07.55-.17.55-.38 0-.19-.01-.82-.01-1.49-2.01.37-2.53-.49-2.69-.94-.09-.23-.48-.94-.82-1.13-.28-.15-.68-.52-.01-.53.63-.01 1.08.58 1.23.82.72 1.21 1.87.87 2.33.66.07-.52.28-.87.51-1.07-1.78-.2-3.64-.89-3.64-3.95 0-.87.31-1.59.82-2.15-.08-.2-.36-1.02.08-2.12 0 0 .67-.21 2.2.82.64-.18 1.32-.27 2-.27.68 0 1.36.09 2 .27 1.53-1.04 2.2-.82 2.2-.82.44 1.1.16 1.92.08 2.12.51.56.82 1.27.82 2.15 0 3.07-1.87 3.75-3.65 3.95.29.25.54.73.54 1.48 0 1.07-.01 1.93-.01 2.2 0 .21.15.46.55.38A8.013 8.013 0 0016 8c0-4.42-3.58-8-8-8z"></path></svg>
      </div>
    `;
  }

  private toolbar() {
    return html`
      <div class="bar">
        <div class="btn back"><span class="tri"></span>Back</div>
        <div class="status">Done. Total sequences: 85. Succeeded: 85</div>
        <div class="tools">
          <div class="btn tool"><svg viewBox="0 0 22 25"><path d="M15.9 15.4 A5.8 5.8 0 1 1 15.3 8.2" fill="none" stroke="#434a51" stroke-width="2.2"></path><path d="M17.8 5.3V11.8H11.6Z" fill="#434a51"></path></svg></div>
          <div class="btn tool"><svg viewBox="0 0 22 25"><path d="M5 5h6.6v4.6h4.6V19.6H5Z M12.5 5l3.8 3.8h-3.8Z" fill="#434a51"></path></svg></div>
          <div class="btn tool"><svg viewBox="0 0 22 25"><path d="M4.3 6.8H18.2L12.9 13V20.9L9.9 19V13Z" fill="#434a51"></path></svg></div>
          <div class="btn tool"><svg viewBox="0 0 22 25"><path d="M9 4.6h4.4v5.6h4.4L11.2 16.4 4.5 10.2H9Z M4.5 18.6h13.4v2.2H4.5Z" fill="#434a51"></path></svg></div>
          <div class="btn tool"><svg viewBox="0 0 22 25"><path d="M2.5 14.5H5.5M5.5 9.5V18.2M5.5 9.5H10M10 6.7V11.2M10 6.7H13.4M13.4 5.3V8.3M13.4 5.3H19.2M13.4 8.3H19.2M10 11.2H19.2M5.5 18.2H11.5M11.5 15.6V19.4M11.5 15.6H19.2M13.5 17.8V20.4M11.5 19.2H13.5M13.5 17.8H19.2M13.5 20.4H19.2" fill="none" stroke="#434a51" stroke-width=".95"></path></svg></div>
        </div>
      </div>
    `;
  }

  private table() {
    return html`
      <div class="main">
        <div class="table">
          <div class="head">
            ${COLUMNS.map(
              ([label, key]) => html`<div class="h">
                <div class="lab"><span class=${classMap({ two: key === "non" })}>${label}</span></div>
                <div class="sorts"><span class="up"></span><span class="dn"></span></div>
                <div class="q">?</div>
              </div>`
            )}
            <div class="h last">
              <div class="sel">Nucleotide sequence<svg viewBox="0 0 8 8"><path d="M.8 2l3.2 3.6L7.2 2"></path></svg></div>
              <div class="q">?</div>
            </div>
          </div>
          <div class="rows"><div class="shift">${ROWS.map((r) => html`<seq-row .row=${r}></seq-row>`)}</div></div>
        </div>
        <div class="side"><span class="sup"></span><div class="thumb"></div><div class="fill"></div><span class="sdn"></span></div>
      </div>
    `;
  }

  private genome() {
    return html`
      <div class="genome">
        <div class="gl"><div class="gtxt">Genome annotation <span class="gq">?</span></div></div>
        <svg class="gsvg" viewBox="1455.4 1504.7 1218.2 88.6" preserveAspectRatio="none">
          <rect x="1455" y="1551" width="1219" height="2" fill="#d0d6dd"></rect>
          ${GENES.map(([x, y, w, h, c]) => svg`<rect x=${x} y=${y} width=${w} height=${h} fill=${c}></rect>`)}
          ${TICKS.map(
            ([n, x]) => svg`<rect x=${x - 0.7} y="1552.6" width="1.4" height="8.4" fill="#555"></rect>
              <text transform="translate(${x} 1576.8) scale(1.153 1)" text-anchor="middle" font-size="17.4" fill="#62676c">${n}</text>`
          )}
        </svg>
        <div class="side gside"><span class="sup"></span><div class="fill"></div><span class="sdn dim"></span></div>
      </div>
    `;
  }

  private footer() {
    return html`
      <div class="foot">
        <div class="copy">Nextclade (c) 2020-2021 Nextstrain developers</div>
        <svg class="f1" viewBox="0 0 18 18" fill="none"><circle cx="9" cy="9" r="5.2" stroke="#5a5a5a" stroke-width=".8"></circle><circle cx="9" cy="9" r="7.6" stroke="#555" stroke-width="1.6" stroke-dasharray=".9 2.3"></circle><path d="M4.4 10L7 6.4L9 8.8L10.4 5.6L12.4 9.6L14.4 6.6M8.6 12V8" stroke="#a8483e" stroke-width=".8"></path></svg>
        <div class="bz"><span class="bb">B</span><span>Z</span></div>
        <svg class="f3" viewBox="0 0 20 20"><circle cx="10" cy="10" r="9.3" fill="#e02b2b" stroke="#f3dada" stroke-width=".9"></circle><path d="M10 1V8.5L14 10.5L19 8M14 10.5L12.5 14L14.5 18M12.5 14H8L5.5 18M8 14L6.5 10.5L10 8.5M6.5 10.5L1 9.5M10 8.5L5 3M10 4.5L15.5 3.2" fill="none" stroke="#f3dada" stroke-width=".9"></path></svg>
        <svg class="f3" viewBox="0 0 20 20" fill="none" stroke-width="1.7"><circle cx="10" cy="10" r="9.5" fill="#1f3c4c"></circle><path d="M3 5v5M6.4 2.5v5M10 1v4M13.6 6v5M17 6v6M6.4 14v4M13.6 14v4" stroke="#8ccf3c"></path><path d="M1.5 8v5M6.4 9v3M10 7v3M13.6 2v3M17 13v2M10 14v5M3.2 12v4" stroke="#2fa3a8"></path><path d="M7.5 11.5l5-3M8 13.5l5-2" stroke="#1d3f7a"></path></svg>
        <div class="vercel"><span class="vt"></span><span>Powered by <b>Vercel</b></span></div>
        <div class="ver">version 1.5.2 (commit: 134340f, build: 547, branch: release)</div>
      </div>
    `;
  }

  render() {
    return html`
      <div class="stage">${this.nav()} ${this.toolbar()} ${this.table()} ${this.genome()} ${this.footer()}</div>
      ${NOTES.map(([text, cls]) => html`<div class="note ${cls}"><span>${text}</span></div>`)}
      <svg class="over" viewBox="0 0 2804 1648">
        ${ARROWS.map(
          (a) => svg`<path d="M${a[6]} ${a[7]}L${a[8]} ${a[9]}" stroke="#f1c232" stroke-width="9.5"></path>
            <path d="M${a[0]} ${a[1]}L${a[2]} ${a[3]}L${a[6]} ${a[7]}L${a[4]} ${a[5]}Z" fill="#f1c232"></path>`
        )}
      </svg>
    `;
  }
}
